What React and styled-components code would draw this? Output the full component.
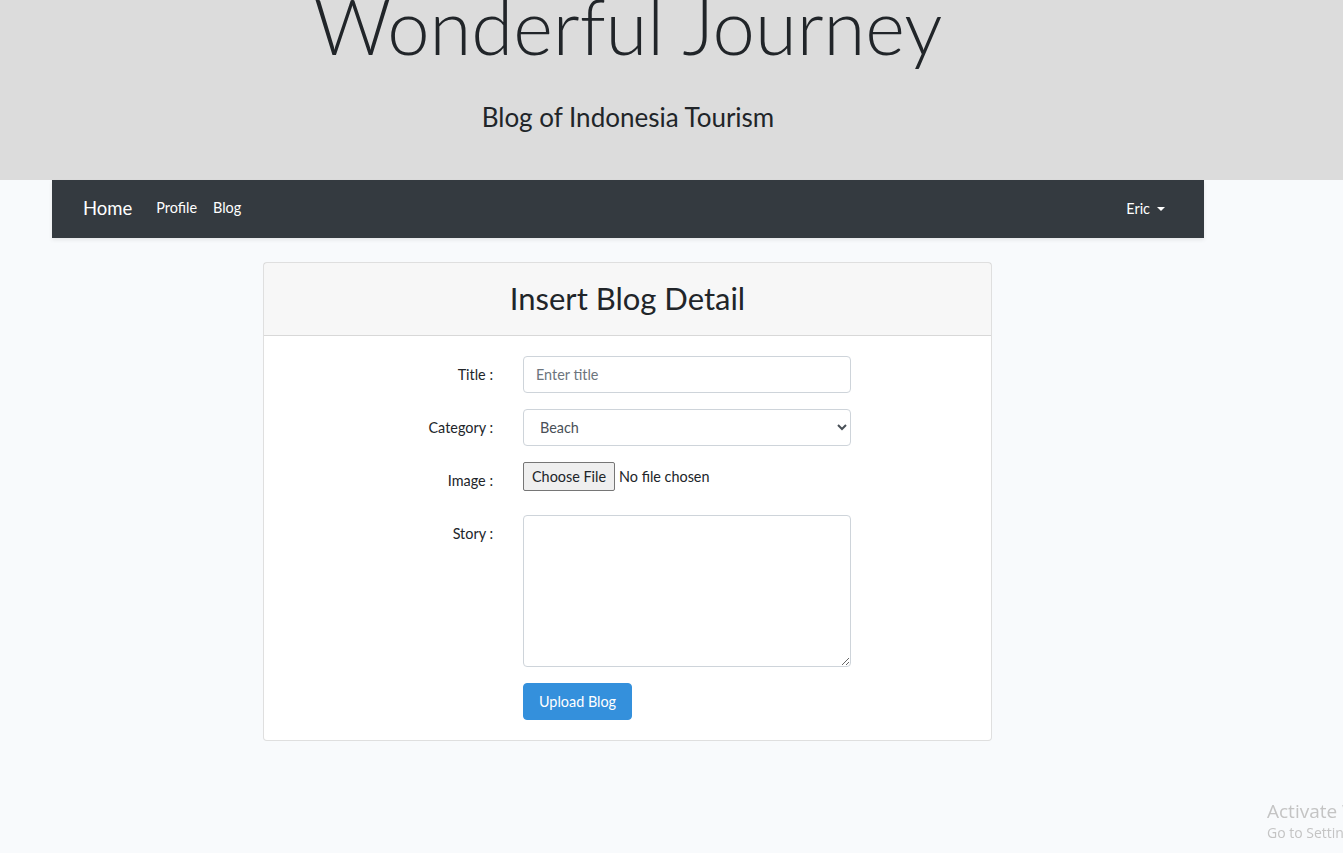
import React from 'react';
import styled, { createGlobalStyle } from 'styled-components';

const GlobalStyle = createGlobalStyle`
  html, body {
    margin: 0;
    padding: 0;
    background-color: #f8fafc;
    overflow-x: hidden;
  }
  body {
    font-family: Lato, "Noto Sans", sans-serif;
    font-size: 14.4px;
    line-height: 1.6;
    color: #212529;
    min-height: 853px;
  }
`;

const Jumbotron = styled.header`
  background-color: #dcdcdc;
  height: 180px;
  overflow: hidden;
`;

const Inner = styled.div`
  width: 1152px;
  margin-left: 52px;
`;

const BigTitle = styled.h1`
  margin: -20px 0 0;
  font-size: 76px;
  font-weight: 300;
  line-height: 1.2;
  text-align: center;
`;

const Lead = styled.p`
  margin: 26px 0 0;
  font-size: 26px;
  font-weight: 400;
  text-align: center;
`;

const Navbar = styled.nav`
  height: 58px;
  background-color: #343a40;
  box-shadow: 0 2px 4px rgba(0, 0, 0, 0.08);
  display: flex;
  align-items: center;
  padding: 0 31px;
  box-sizing: border-box;
`;

const Brand = styled.a`
  color: #fff;
  font-size: 18.5px;
  margin-right: 16px;
  text-decoration: none;
`;

const NavLink = styled.a`
  color: #fff;
  font-size: 14.4px;
  padding: 0 8px;
  margin-top: -2px;
  text-decoration: none;
  &:first-of-type {
    padding-left: 0;
  }
`;

const Spacer = styled.div`
  flex: 1;
`;

const UserToggle = styled.a`
  color: #fff;
  font-size: 14.4px;
  padding: 0 8px;
  display: flex;
  align-items: center;
  gap: 7px;
`;

const Caret = styled.span`
  width: 0;
  height: 0;
  border-left: 4px solid transparent;
  border-right: 4px solid transparent;
  border-top: 4px solid #fff;
`;

const Card = styled.section`
  width: 729px;
  margin: 24px 0 0 211px;
  background: #fff;
  border: 1px solid rgba(0, 0, 0, 0.125);
  border-radius: 4px;
  box-sizing: border-box;
`;

const CardHeader = styled.div`
  height: 73px;
  background-color: rgba(0, 0, 0, 0.03);
  border-bottom: 1px solid rgba(0, 0, 0, 0.125);
  display: flex;
  align-items: center;
  justify-content: center;
  box-sizing: border-box;
`;

const CardTitle = styled.h2`
  margin: 0;
  font-size: 31px;
  font-weight: 400;
  line-height: 1.2;
`;

const Form = styled.form`
  padding: 20px;
  display: grid;
  grid-template-columns: 209px 328px;
  column-gap: 30px;
  row-gap: 16px;
`;

const Label = styled.label`
  text-align: right;
  padding-top: 7px;
  line-height: 23px;
  height: 37px;
  box-sizing: border-box;
`;

const Field = styled.input`
  height: 37px;
  width: 100%;
  box-sizing: border-box;
  padding: 6px 12px;
  font-family: inherit;
  font-size: 14.4px;
  color: #495057;
  border: 1px solid #ced4da;
  border-radius: 4px;
  &::placeholder {
    color: #6c757d;
  }
`;

const Select = styled.select`
  height: 37px;
  width: 100%;
  box-sizing: border-box;
  padding: 6px 12px;
  font-family: inherit;
  font-size: 14.4px;
  color: #495057;
  background: #fff;
  border: 1px solid #ced4da;
  border-radius: 4px;
`;

const FileInput = styled.input`
  font-family: inherit;
  font-size: 14.4px;
  color: #212529;
  align-self: start;
  &::file-selector-button {
    font-family: inherit;
    font-size: 14.4px;
    color: #212529;
    height: 29px;
    padding: 0 8px;
    margin-right: 4px;
    background: #efefef;
    border: 1px solid #767676;
    border-radius: 2px;
  }
`;

const TextArea = styled.textarea`
  height: 152px;
  width: 100%;
  box-sizing: border-box;
  padding: 6px 12px;
  font-family: inherit;
  font-size: 14.4px;
  border: 1px solid #ced4da;
  border-radius: 4px;
`;

const Button = styled.button`
  grid-column: 2;
  justify-self: start;
  height: 37px;
  padding: 0 15px;
  font-family: inherit;
  font-size: 14.4px;
  color: #fff;
  background-color: #3490dc;
  border: 1px solid #3490dc;
  border-radius: 4px;
`;

const Watermark = styled.div`
  position: fixed;
  left: 1267px;
  top: 798px;
  color: #c4c4c4;
  white-space: nowrap;
  font-family: "Open Sans", "Noto Sans", sans-serif;
  pointer-events: none;
`;

const WatermarkTitle = styled.div`
  font-size: 19px;
  line-height: 26px;
`;

const WatermarkSub = styled.div`
  font-size: 14px;
  line-height: 18px;
`;

const App = () => {
  return (
    <>
      <GlobalStyle />
      <Jumbotron>
        <Inner>
          <BigTitle>Wonderful Journey</BigTitle>
          <Lead>Blog of Indonesia Tourism</Lead>
        </Inner>
      </Jumbotron>
      <Inner>
        <Navbar>
          <Brand href="#">Home</Brand>
          <NavLink href="#">Profile</NavLink>
          <NavLink href="#">Blog</NavLink>
          <Spacer />
          <UserToggle>
            Eric <Caret />
          </UserToggle>
        </Navbar>
        <Card>
          <CardHeader>
            <CardTitle>Insert Blog Detail</CardTitle>
          </CardHeader>
          <Form onSubmit={(e) => e.preventDefault()}>
            <Label htmlFor="title">Title :</Label>
            <Field id="title" type="text" placeholder="Enter title" />
            <Label htmlFor="category">Category :</Label>
            <Select id="category" defaultValue="Beach">
              <option>Beach</option>
              <option>Mountain</option>
              <option>City</option>
            </Select>
            <Label htmlFor="image">Image :</Label>
            <FileInput id="image" type="file" />
            <Label htmlFor="story">Story :</Label>
            <TextArea id="story" />
            <Button type="submit">Upload Blog</Button>
          </Form>
        </Card>
      </Inner>
      <Watermark>
        <WatermarkTitle>Activate Windows</WatermarkTitle>
        <WatermarkSub>Go to Settings to activate Windows.</WatermarkSub>
      </Watermark>
    </>
  );
};

export default App;
